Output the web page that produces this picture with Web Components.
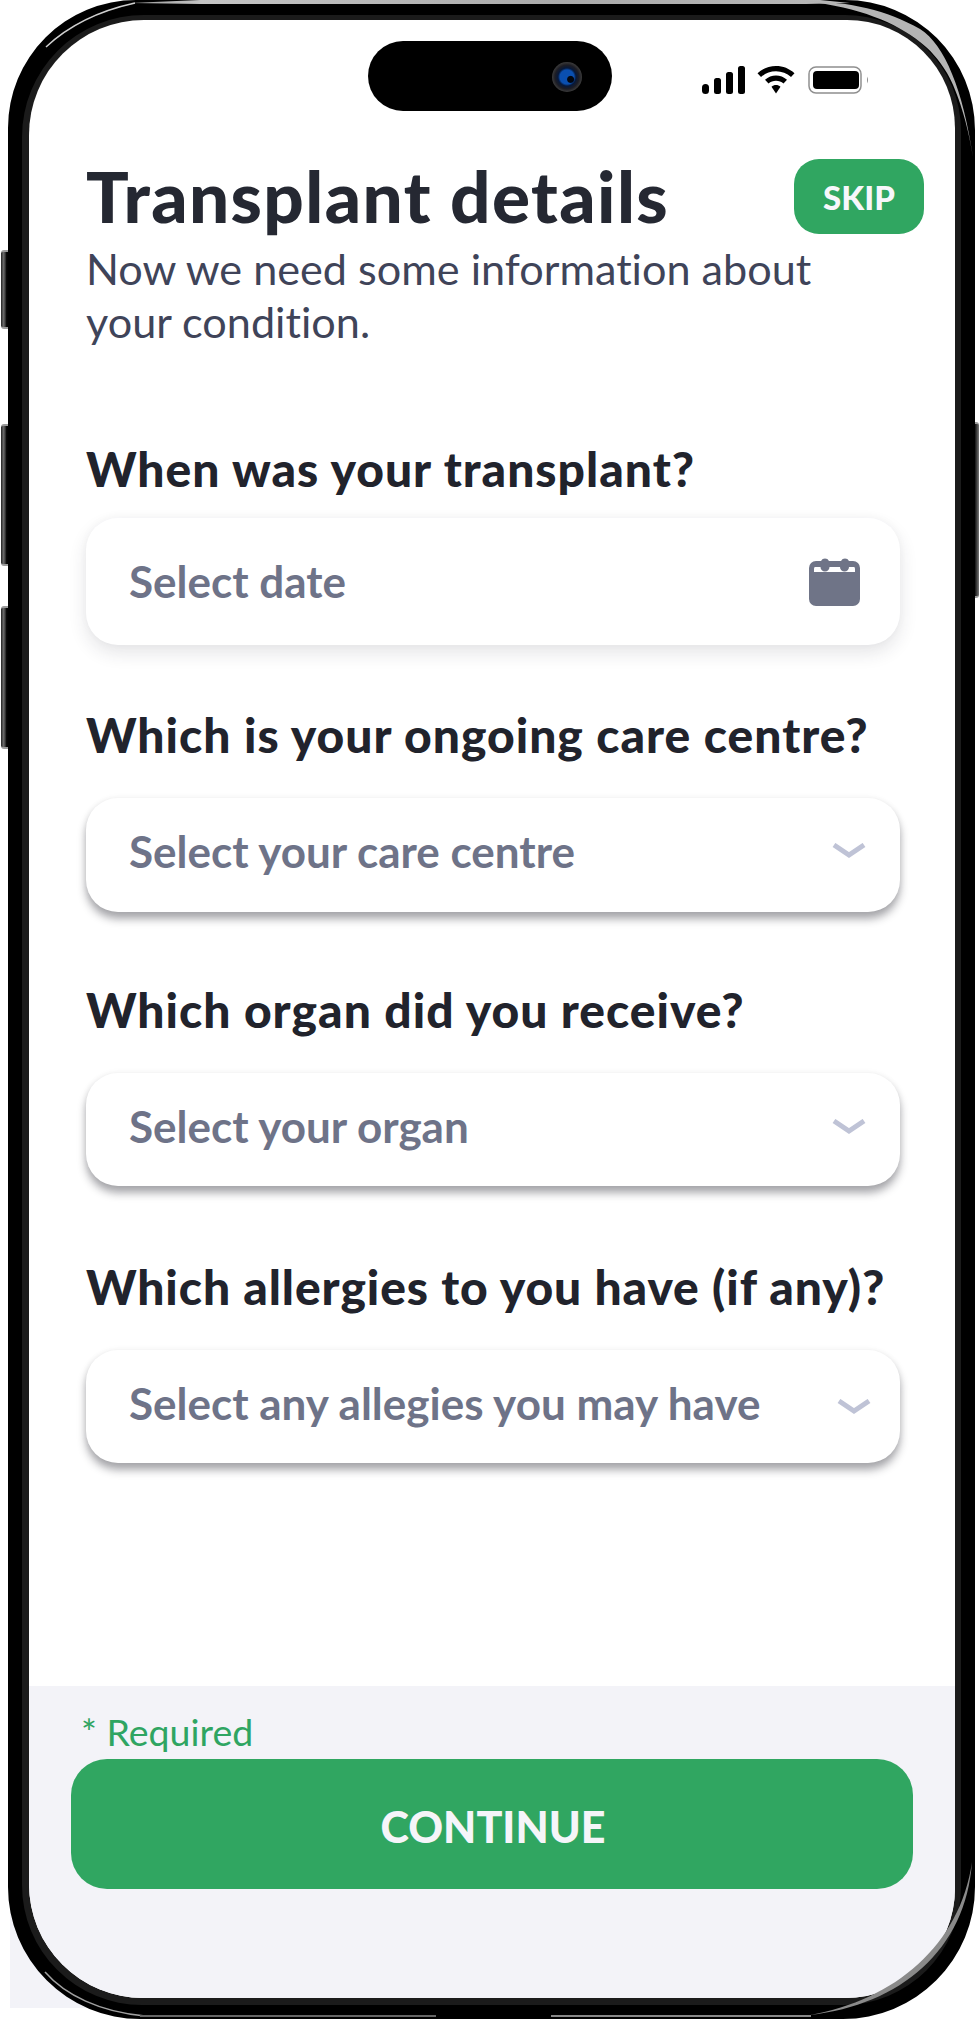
<!DOCTYPE html>
<html lang="en">
<head>
<meta charset="utf-8">
<title>Transplant details</title>
<style>
  html, body { margin: 0; background: #fff; }
</style>
</head>
<body>
<phone-frame>
  <status-bar></status-bar>
  <page-header heading="Transplant details" action="SKIP">Now we need some information about your condition.</page-header>
  <form-field style="--label-top:95px;--label-gap:23px;--card-h:127px;--text-lift:2px" label="When was your transplant?" placeholder="Select date" icon="calendar" soft></form-field>
  <form-field style="--label-top:64px;--card-h:114px;--nudge-y:-5px;--nudge-x:-1px" label="Which is your ongoing care centre?" placeholder="Select your care centre" icon="chevron"></form-field>
  <form-field style="--label-top:72px;--card-h:113px;--nudge-y:-3px;--nudge-x:-1px" label="Which organ did you receive?" placeholder="Select your organ" icon="chevron"></form-field>
  <form-field style="--label-top:75px;--card-h:113px;--nudge-x:4px;--label-track:.9px" label="Which allergies to you have (if any)?" placeholder="Select any allegies you may have" icon="chevron"></form-field>
  <form-footer note="* Required" action="CONTINUE"></form-footer>
</phone-frame>

<script>
"use strict";
const FONT = 'Lato, "Open Sans", sans-serif';

const frameTemplate = document.createElement('template');
frameTemplate.innerHTML = `
<style>
  :host {
    display: block;
    position: relative;
    width: 980px;
    height: 2019px;
    overflow: hidden;
    font-family: ${FONT};
    font-variant-ligatures: none;
  }
  .backing {
    position: absolute;
    left: 10px;
    top: 1900px;
    width: 120px;
    height: 108px;
    background: #f3f3f8;
  }
  .case {
    position: relative;
    margin-left: 8px;
    width: 967px;
    height: 2019px;
    box-sizing: border-box;
    border: solid #000;
    border-width: 15px 14px 14px 14px;
    border-radius: 128px 130px 132px 132px;
    background: #000;
  }
  .bezel {
    height: 100%;
    box-sizing: border-box;
    border: solid #1b1b1b;
    border-width: 5px 6px 7px 7px;
    border-radius: 122px 116px 118px 120px;
    background: #1b1b1b;
  }
  .screen {
    height: 100%;
    border-radius: 115px 108px 110px 114px;
    overflow: hidden;
    background: #fff;
    display: flex;
    flex-direction: column;
  }
  .side {
    position: absolute;
    width: 8px;
    left: 1px;
    box-sizing: border-box;
    border-radius: 3px 0 0 3px;
    background: linear-gradient(90deg, #222, #6a6a6a 30%, #444 50%, #050505 70%, #000);
    border-top: 2px solid #9a9a9a;
    border-bottom: 2px solid #9a9a9a;
  }
  .side.right {
    left: auto;
    right: 1px;
    width: 4px;
    border-radius: 0 3px 3px 0;
    background: linear-gradient(90deg, #111, #777);
  }
  .edges {
    position: absolute;
    inset: 0;
    pointer-events: none;
  }
</style>
<div class="backing"></div>
<div class="side" style="top:250px;height:79px"></div>
<div class="side" style="top:424px;height:142px"></div>
<div class="side" style="top:606px;height:143px"></div>
<div class="side right" style="top:422px;height:176px"></div>
<div class="case">
  <div class="bezel">
    <div class="screen"><slot></slot></div>
  </div>
</div>
<svg class="edges" width="980" height="2019" viewBox="0 0 980 2019">
  <defs>
    <linearGradient id="top" x1="0" x2="1" y1="0" y2="0">
      <stop offset="0" stop-color="#999"/>
      <stop offset=".1" stop-color="#c4c4c4"/>
      <stop offset=".6" stop-color="#aaa"/>
      <stop offset="1" stop-color="#b8b8b8"/>
    </linearGradient>
  </defs>
  <path d="M130 3L200 0H820L850 3L806 4H200Z" fill="url(#top)"/>
  <path d="M46 47Q80 15 135 3" fill="none" stroke="#cfcfcf" stroke-width="1.500"/>
  <path d="M806 1C850 2 887 10 920 29C945 45 963 90 973 157C968 125 958 92 947 73C938 58 930 50 920 42C895 22 860 8 806 1Z" fill="#b4b4b4"/>
  <path d="M972 1862C966 1950 900 2005 810 2015C895 2000 960 1945 972 1862Z" fill="#8a8a8a"/>
  <path d="M45 1972C65 1995 100 2012 145 2016" fill="none" stroke="#a0a0a0" stroke-width="1.500"/>
  <rect x="140" y="2015" width="296" height="2" fill="#666"/>
  <rect x="551" y="2015" width="260" height="2" fill="#888"/>
  <rect x="436" y="2014" width="115" height="5" rx="2" fill="#000"/>
</svg>`;
class PhoneFrame extends HTMLElement {
  constructor() {
    super();
    this.attachShadow({ mode: 'open' });
    this.shadowRoot.appendChild(frameTemplate.content.cloneNode(true));
  }
}
window.customElements.define('phone-frame', PhoneFrame);

const statusTemplate = document.createElement('template');
statusTemplate.innerHTML = `
<style>
  :host {
    display: flex;
    position: relative;
    justify-content: flex-end;
    align-items: flex-start;
    gap: 13px;
    flex: none;
    box-sizing: border-box;
    height: 139px;
    padding: 46px 85px 0 0;
  }
  .island {
    position: absolute;
    left: 339px;
    top: 21px;
    width: 244px;
    height: 70px;
    border-radius: 35px;
    background: #000;
  }
  .lens {
    position: absolute;
    right: 30px;
    top: 21px;
    width: 30px;
    height: 30px;
    border-radius: 50%;
    background: radial-gradient(circle at 62% 58%, #02060f 0 3px, transparent 4px), radial-gradient(circle at 50% 50%, #0a4fb0 0 7px, #06183a 9px, #1d1d24 12px, #3c3c3c 15px);
  }
  svg { display: block; }
  .signal { margin-right: -2px; }
</style>
<div class="island"><div class="lens"></div></div>
<svg class="signal" width="44" height="28" viewBox="0 0 44 28">
  <rect x="0" y="18" width="7" height="10" rx="3.5"/>
  <rect x="12" y="12" width="7" height="16" rx="2.5"/>
  <rect x="24" y="6" width="7" height="22" rx="2.5"/>
  <rect x="36" y="0" width="7" height="28" rx="2.5"/>
</svg>
<svg width="38" height="28" viewBox="0 0 38 28">
  <path d="M19 0C12 0 5.600 2.600 0.500 7.200L4 11C8 7.300 13.300 5.200 19 5.200S30 7.300 34 11L37.500 7.200C32.400 2.600 26 0 19 0Z"/>
  <path d="M19 9.500C15 9.500 11.200 11 8 13.700L11.500 17.500C13.600 15.800 16.200 14.800 19 14.800S24.400 15.800 26.500 17.500L30 13.700C26.800 11 23 9.500 19 9.500Z"/>
  <path d="M19 19C17.300 19 15.700 19.600 14.500 20.700L19 27.500L23.500 20.700C22.300 19.600 20.700 19 19 19Z"/>
</svg>
<svg width="62" height="28" viewBox="0 0 62 28">
  <rect x="1" y="1" width="52" height="26" rx="7" fill="none" stroke="#8f8f8f" stroke-width="1.500"/>
  <rect x="5" y="5" width="46" height="18" rx="4"/>
  <path d="M59 10.500Q61 14 59 17.500Z" fill="#8f8f8f"/>
</svg>`;
class StatusBar extends HTMLElement {
  constructor() {
    super();
    this.attachShadow({ mode: 'open' });
    this.shadowRoot.appendChild(statusTemplate.content.cloneNode(true));
  }
}
window.customElements.define('status-bar', StatusBar);

const headerTemplate = document.createElement('template');
headerTemplate.innerHTML = `
<style>
  :host {
    display: block;
    flex: none;
    padding: 0 31px 0 57px;
  }
  .top {
    display: flex;
    justify-content: space-between;
    align-items: flex-start;
    height: 75px;
  }
  h1 {
    margin: 0;
    font-size: 71px;
    font-weight: 900;
    letter-spacing: 1.4px;
    line-height: 73px;
    color: #252832;
  }
  button {
    appearance: none;
    border: none;
    width: 130px;
    height: 75px;
    border-radius: 25px;
    background: #30a661;
    color: #f7f7fb;
    font: 900 33px ${FONT};
  }
  p {
    margin: 0;
    padding-top: 8px;
    width: 745px;
    font-size: 43.2px;
    line-height: 53px;
    color: #3f4459;
  }
</style>
<div class="top"><h1></h1><button></button></div>
<p><slot></slot></p>`;
class PageHeader extends HTMLElement {
  constructor() {
    super();
    this.attachShadow({ mode: 'open' });
    this.shadowRoot.appendChild(headerTemplate.content.cloneNode(true));
  }
  connectedCallback() {
    this.shadowRoot.querySelector('h1').textContent = this.getAttribute('heading');
    this.shadowRoot.querySelector('button').textContent = this.getAttribute('action');
  }
}
window.customElements.define('page-header', PageHeader);

const fieldTemplate = document.createElement('template');
fieldTemplate.innerHTML = `
<style>
  :host {
    display: block;
    flex: none;
    padding: 0 55px 0 57px;
    margin-top: var(--label-top, 0px);
  }
  label {
    display: block;
    font-size: 48px;
    font-weight: 900;
    letter-spacing: var(--label-track, 1px);
    line-height: 52px;
    color: #21232c;
    margin-bottom: var(--label-gap, 37px);
    white-space: nowrap;
  }
  .card {
    display: flex;
    justify-content: space-between;
    align-items: center;
    box-sizing: border-box;
    height: var(--card-h, 114px);
    padding: 0 33px 0 43px;
    border-radius: 32px;
    background: #fff;
    box-shadow: 0 7px 9px rgba(30, 30, 40, .38), 0 0 6px rgba(30, 30, 40, .06);
  }
  :host([soft]) .card {
    padding-right: 40px;
    box-shadow: 0 8px 18px rgba(40, 40, 60, .12), 0 -1px 8px rgba(40, 40, 60, .03);
  }
  span {
    font-size: 44px;
    font-weight: 700;
    color: #6e7388;
    white-space: nowrap;
    padding-bottom: var(--text-lift, 8px);
  }
  svg {
    display: block;
    flex: none;
    transform: translate(var(--nudge-x, 0px), var(--nudge-y, 0px));
  }
</style>
<label></label>
<div class="card"><span></span><div class="icon"></div></div>`;
const fieldIcons = {
  calendar: `<svg width="51" height="49" viewBox="0 0 51 49">
    <path fill="#6f7487" d="M7 4H12A4.500 4.500 0 0 1 20 4H32A4.500 4.500 0 0 1 40 4H44A7 7 0 0 1 51 11V42A7 7 0 0 1 44 49H7A7 7 0 0 1 0 42V11A7 7 0 0 1 7 4Z"/>
    <path fill="#fff" d="M6 10H11.500A4.500 4.500 0 0 0 20.500 10H31A4.500 4.500 0 0 0 40 10H45Q46 10 46 12V15H5V12Q5 10 6 10Z"/>
  </svg>`,
  chevron: `<svg width="34" height="15" viewBox="0 0 34 15">
    <path fill="none" stroke="#bfc3d6" stroke-width="5" d="M2 2L17 12L32 2"/>
  </svg>`
};
class FormField extends HTMLElement {
  constructor() {
    super();
    this.attachShadow({ mode: 'open' });
    this.shadowRoot.appendChild(fieldTemplate.content.cloneNode(true));
  }
  connectedCallback() {
    this.shadowRoot.querySelector('label').textContent = this.getAttribute('label');
    this.shadowRoot.querySelector('span').textContent = this.getAttribute('placeholder');
    this.shadowRoot.querySelector('.icon').innerHTML = fieldIcons[this.getAttribute('icon')] || '';
  }
}
window.customElements.define('form-field', FormField);

const footerTemplate = document.createElement('template');
footerTemplate.innerHTML = `
<style>
  :host {
    display: block;
    flex: 1;
    margin-top: 223px;
    padding: 24px 42px 0 42px;
    background: #f3f3f8;
  }
  div {
    font-size: 37.5px;
    line-height: 43px;
    color: #2fa562;
    padding-left: 10px;
    margin-bottom: 6px;
  }
  button {
    appearance: none;
    display: block;
    border: none;
    width: 100%;
    height: 130px;
    padding: 5px 0 0 2px;
    border-radius: 36px;
    background: #30a661;
    color: #f5f5f9;
    font: 900 43px ${FONT};
  }
</style>
<div></div>
<button></button>`;
class FormFooter extends HTMLElement {
  constructor() {
    super();
    this.attachShadow({ mode: 'open' });
    this.shadowRoot.appendChild(footerTemplate.content.cloneNode(true));
  }
  connectedCallback() {
    this.shadowRoot.querySelector('div').textContent = this.getAttribute('note');
    this.shadowRoot.querySelector('button').textContent = this.getAttribute('action');
  }
}
window.customElements.define('form-footer', FormFooter);
</script>
</body>
</html>
